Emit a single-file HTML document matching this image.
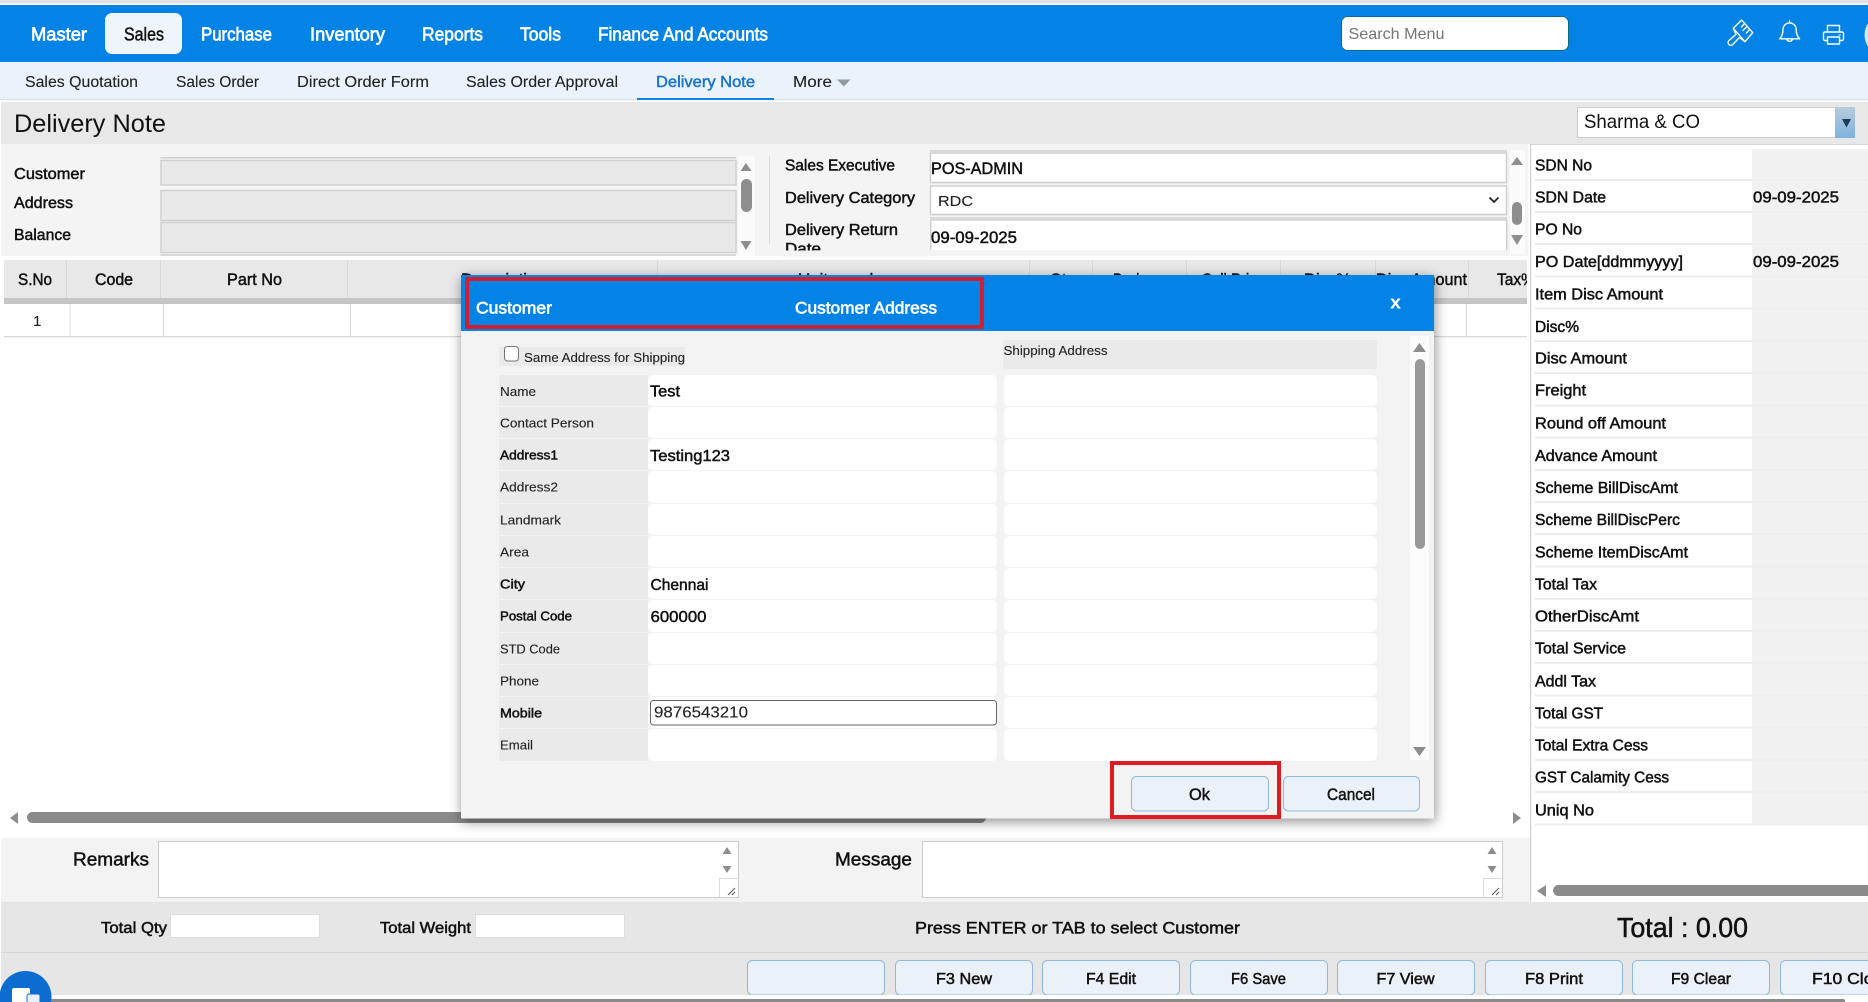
<!DOCTYPE html>
<html lang="en"><head><meta charset="utf-8"><title>Delivery Note</title>
<style>
html,body{margin:0;padding:0;width:1868px;height:1002px;overflow:hidden;background:#fff}
svg{display:block;font-family:"Liberation Sans",sans-serif}
text{fill:#111;white-space:pre}
.m{stroke:#111;stroke-width:.48px}
.w{fill:#fff;stroke:#fff;stroke-width:.65px}
.l{fill:#222;stroke:#222;stroke-width:.12px}
.a{fill:#8e8e8e}
</style></head><body>
<svg width="1868" height="1002" viewBox="0 0 1868 1002" xmlns="http://www.w3.org/2000/svg">
<defs>
<filter id="sh" x="-5%" y="-5%" width="110%" height="112%"><feDropShadow dx="1" dy="3" stdDeviation="6" flood-color="#000" flood-opacity=".45"/></filter>
<linearGradient id="dd" x1="0" y1="0" x2="0" y2="1"><stop offset="0" stop-color="#b9cbdc"/><stop offset="1" stop-color="#7fb2de"/></linearGradient>
</defs>
<rect width="1868" height="1002" fill="#fff"/>
<!-- top nav -->
<rect width="1868" height="3.5" fill="#dfe1e3"/>
<rect y="5" width="1868" height="57" fill="#0383e6"/>
<rect x="105" y="13" width="77" height="41" rx="7" fill="#eef5fc"/>
<g font-size="18">
<text class="w" x="31" y="40.5" textLength="56" lengthAdjust="spacingAndGlyphs">Master</text>
<text class="m" x="124" y="40.5" textLength="40" lengthAdjust="spacingAndGlyphs">Sales</text>
<text class="w" x="201" y="40.5" textLength="71" lengthAdjust="spacingAndGlyphs">Purchase</text>
<text class="w" x="310" y="40.5" textLength="75" lengthAdjust="spacingAndGlyphs">Inventory</text>
<text class="w" x="422" y="40.5" textLength="61" lengthAdjust="spacingAndGlyphs">Reports</text>
<text class="w" x="520" y="40.5" textLength="41" lengthAdjust="spacingAndGlyphs">Tools</text>
<text class="w" x="598" y="40.5" textLength="170" lengthAdjust="spacingAndGlyphs">Finance And Accounts</text>
</g>
<rect x="1341.5" y="16.5" width="227" height="34" rx="6" fill="#fff" stroke="#0b6b85"/>
<text x="1348.5" y="39" font-size="16" style="fill:#757575" textLength="96" lengthAdjust="spacingAndGlyphs">Search Menu</text>
<!-- icons -->
<g fill="none" stroke="#fff" stroke-width="1.4" stroke-linejoin="round" stroke-linecap="round">
<path d="M1733.3 28.3L1741.7 20L1752.7 32.7L1745 41.7Z"/>
<path d="M1733.3 28.3L1736 34.5L1729 40.5A2.6 2.6 0 0 0 1732.6 44.6L1739.5 37.5L1745 41.7"/>
<path d="M1744.5 23.5L1741.5 27M1747 26.5L1743 30.5M1749.5 29.5L1746.5 33"/>
<path d="M1779.7 38.8C1782.5 36 1783 33 1783 29.5A6.6 6.6 0 0 1 1796.2 29.5C1796.2 33 1796.8 36 1799.6 38.8Z"/>
<path d="M1786.8 39.2A2.9 2.9 0 0 0 1792.4 39.2M1789.6 21V23"/>
<path d="M1827.5 32V25.5H1839.5V32M1827.5 40.5H1825A1.6 1.6 0 0 1 1823.5 39V33.6A1.6 1.6 0 0 1 1825 32H1842A1.6 1.6 0 0 1 1843.5 33.6V39A1.6 1.6 0 0 1 1842 40.5H1839.5"/>
<path d="M1827.5 37H1839.5V44H1827.5Z"/><path d="M1839 35H1840.5" stroke-width="1"/>
</g>
<circle cx="1885" cy="35" r="20.5" fill="#d4e8f8"/>
<!-- sub nav -->
<rect y="62" width="1868" height="37" fill="#eaf3fc"/>
<rect y="99" width="1868" height="1.2" fill="#d6dde2"/>
<g font-size="15.5">
<text class="l" x="25" y="87" textLength="113" lengthAdjust="spacingAndGlyphs">Sales Quotation</text>
<text class="l" x="176" y="87" textLength="83" lengthAdjust="spacingAndGlyphs">Sales Order</text>
<text class="l" x="297" y="87" textLength="132" lengthAdjust="spacingAndGlyphs">Direct Order Form</text>
<text class="l" x="466" y="87" textLength="152" lengthAdjust="spacingAndGlyphs">Sales Order Approval</text>
<text x="656" y="87" style="fill:#1675d1;stroke:#1675d1;stroke-width:.45px" textLength="99" lengthAdjust="spacingAndGlyphs">Delivery Note</text>
<text class="l" x="793" y="87" textLength="39" lengthAdjust="spacingAndGlyphs">More</text>
</g>
<path d="M837 79.5H850.5L843.8 86.5Z" fill="#8e9aa4"/>
<rect x="637" y="98" width="137" height="2" fill="#0a84e0"/>
<!-- title bar -->
<rect x="1" y="102" width="1867" height="42" fill="#e8e8e8"/>
<text x="14" y="132" font-size="25" textLength="152" lengthAdjust="spacingAndGlyphs">Delivery Note</text>
<rect x="1577.5" y="107.5" width="258" height="30" fill="#fff" stroke="#ccc"/>
<rect x="1835" y="107" width="20" height="31" rx="1" fill="url(#dd)"/>
<path d="M1842 119H1851L1846.5 127.5Z" fill="#1c3a5c"/>
<text x="1584" y="128" font-size="19.5" textLength="116" lengthAdjust="spacingAndGlyphs">Sharma &amp; CO</text>
<!-- form area -->
<rect x="1" y="144" width="1527" height="112" fill="#f4f4f4"/>
<g font-size="16">
<text class="m" x="14" y="179" textLength="71" lengthAdjust="spacingAndGlyphs">Customer</text>
<text class="m" x="14" y="208" textLength="59" lengthAdjust="spacingAndGlyphs">Address</text>
<text class="m" x="14" y="240" textLength="57" lengthAdjust="spacingAndGlyphs">Balance</text>
</g>
<g fill="#e9e9e9" stroke="#d0d0d0" stroke-width="1.5">
<path d="M160.5 157.8H736" fill="none"/>
<rect x="161" y="160.5" width="575" height="24.5"/>
<rect x="161" y="190.5" width="575" height="30"/>
<rect x="161" y="222.5" width="575" height="30"/>
<path d="M160.5 255H736" fill="none"/>
</g>
<rect x="738" y="156" width="17" height="100" fill="#fbfbfb"/>
<path d="M746 163L751.5 171H740.5Z" class="a"/><rect x="741" y="179" width="11" height="33" rx="5.5" fill="#8e8e8e"/><path d="M746 250L751.5 241H740.5Z" class="a"/>
<rect x="769" y="156" width="1" height="88" fill="#dcdcdc"/>
<g font-size="16">
<text class="m" x="785" y="170.5" textLength="110" lengthAdjust="spacingAndGlyphs">Sales Executive</text>
<text class="m" x="785" y="203" textLength="130" lengthAdjust="spacingAndGlyphs">Delivery Category</text>
<text class="m" x="785" y="235" textLength="113" lengthAdjust="spacingAndGlyphs">Delivery Return</text>
<text class="m" x="785" y="254" textLength="36" lengthAdjust="spacingAndGlyphs">Date</text>
</g>
<rect x="780" y="250.5" width="148" height="6" fill="#f4f4f4"/>
<g fill="#fff" stroke="#cfcfcf" stroke-width="1.5">
<path d="M930 151H1507" fill="none"/>
<rect x="930.5" y="153" width="576" height="29.5"/>
<rect x="930.5" y="186" width="576" height="28.5"/>
<path d="M930 218H1507" fill="none"/>
<path d="M930.7 220V250H1506.7V220H930.7Z" stroke="none"/>
<path d="M930.7 220H1506.7V250M930.7 220V250" fill="none"/>
</g>
<text class="m" x="931" y="174" font-size="16.5" textLength="92" lengthAdjust="spacingAndGlyphs">POS-ADMIN</text>
<text x="938" y="206" font-size="15" class="l" textLength="35" lengthAdjust="spacingAndGlyphs">RDC</text>
<path d="M1489.5 197.5L1494 202L1498.5 197.5" fill="none" stroke="#222" stroke-width="1.8"/>
<text class="m" x="931" y="243" font-size="16.5" textLength="86" lengthAdjust="spacingAndGlyphs">09-09-2025</text>
<rect x="1510" y="150" width="15" height="104" fill="#fbfbfb"/>
<path d="M1517 157L1523 165H1511Z" class="a"/><rect x="1512" y="202" width="10" height="23" rx="5" fill="#8e8e8e"/><path d="M1517 245L1523 235H1511Z" class="a"/>
<!-- table -->
<rect x="4" y="260" width="1523" height="38" fill="#e8e8e8"/>
<rect x="4" y="298" width="1523" height="6" fill="#c6c6c6"/>
<rect x="4" y="336" width="1523" height="1.3" fill="#d8d8d8"/>
<path d="M66.5 260V298M160.5 260V298M347.5 260V298M657.5 260V298M1029.5 260V298M1092.5 260V298M1186.5 260V298M1280.5 260V298M1375.5 260V298M1468.5 260V298M70 304V336M163.5 304V336M350.5 304V336M1466.5 304V336" stroke="#d8d8d8" fill="none"/>
<g font-size="16.5">
<text class="m" x="18" y="285" textLength="34" lengthAdjust="spacingAndGlyphs">S.No</text>
<text class="m" x="95" y="285" textLength="38" lengthAdjust="spacingAndGlyphs">Code</text>
<text class="m" x="227" y="285" textLength="55" lengthAdjust="spacingAndGlyphs">Part No</text>
<text class="m" x="461" y="285" textLength="85" lengthAdjust="spacingAndGlyphs">Description</text>
<text class="m" x="798" y="285" textLength="80" lengthAdjust="spacingAndGlyphs">Unit speak</text>
<text class="m" x="1050" y="285" textLength="24" lengthAdjust="spacingAndGlyphs">Qty</text>
<text class="m" x="1113" y="285" textLength="30" lengthAdjust="spacingAndGlyphs">Pack</text>
<text class="m" x="1202" y="285" textLength="63" lengthAdjust="spacingAndGlyphs">Sell Price</text>
<text class="m" x="1304" y="285" textLength="47" lengthAdjust="spacingAndGlyphs">Disc%</text>
<text class="m" x="1376" y="285" textLength="91" lengthAdjust="spacingAndGlyphs">Disc Amount</text>
<text class="m" x="1497" y="285" textLength="38" lengthAdjust="spacingAndGlyphs">Tax%</text>
</g>
<rect x="1527" y="256" width="4" height="60" fill="#fff"/>
<text x="33" y="326" font-size="15" class="l">1</text>
<!-- horizontal scrollbar -->
<rect x="27" y="812" width="959" height="11" rx="5.5" fill="#8a8a8a"/>
<path d="M10 818L18 812V824Z" class="a"/>
<path d="M1521 818L1513 812V824Z" class="a"/>
<!-- remarks area -->
<rect x="1" y="838" width="1529" height="64" fill="#f3f3f3"/>
<text class="m" x="73" y="865.5" font-size="18.5" textLength="76" lengthAdjust="spacingAndGlyphs">Remarks</text>
<text class="m" x="835" y="865.5" font-size="18.5" textLength="77" lengthAdjust="spacingAndGlyphs">Message</text>
<rect x="158.5" y="841.5" width="580" height="56" fill="#fff" stroke="#ccc"/>
<rect x="922.5" y="841.5" width="580" height="56" fill="#fff" stroke="#ccc"/>
<g class="a">
<path d="M727 847L731.5 854H722.5Z"/><path d="M727 873L731.5 866H722.5Z"/>
<path d="M1492 847L1496.5 854H1487.5Z"/><path d="M1492 873L1496.5 866H1487.5Z"/>
</g>
<path d="M719.5 897V878.5H738.5M1483.5 897V878.5H1502.5" fill="none" stroke="#ddd"/>
<path d="M728 895L735 888M732 895L735 892M1492 895L1499 888M1496 895L1499 892" stroke="#555" fill="none"/>
<!-- right panel -->
<rect x="1530" y="144" width="338" height="758" fill="#fff"/>
<rect x="1752" y="149" width="116" height="675" fill="#f1f1f1"/>
<rect x="1530" y="144" width="338" height="1" fill="#d6d6d6"/>
<rect x="1530" y="144" width="1.2" height="758" fill="#d0d0d0"/>
<path d="M1535 180H1868M1535 212H1868M1535 244H1868M1535 276.5H1868M1535 308.5H1868M1535 341H1868M1535 373H1868M1535 405.5H1868M1535 437.5H1868M1535 470H1868M1535 502H1868M1535 534H1868M1535 566.5H1868M1535 599H1868M1535 631H1868M1535 663H1868M1535 695.5H1868M1535 727.5H1868M1535 760H1868M1535 792H1868M1535 824.5H1868" stroke="#ededed" stroke-width="2" fill="none"/>
<g font-size="15.5">
<text class="m" x="1535" y="170.5" textLength="57" lengthAdjust="spacingAndGlyphs">SDN No</text>
<text class="m" x="1535" y="202.5" textLength="71" lengthAdjust="spacingAndGlyphs">SDN Date</text>
<text class="m" x="1535" y="234.5" textLength="47" lengthAdjust="spacingAndGlyphs">PO No</text>
<text class="m" x="1535" y="267" textLength="148" lengthAdjust="spacingAndGlyphs">PO Date[ddmmyyyy]</text>
<text class="m" x="1535" y="299.5" textLength="128" lengthAdjust="spacingAndGlyphs">Item Disc Amount</text>
<text class="m" x="1535" y="332" textLength="44" lengthAdjust="spacingAndGlyphs">Disc%</text>
<text class="m" x="1535" y="363.5" textLength="92" lengthAdjust="spacingAndGlyphs">Disc Amount</text>
<text class="m" x="1535" y="395.5" textLength="51" lengthAdjust="spacingAndGlyphs">Freight</text>
<text class="m" x="1535" y="428.5" textLength="131" lengthAdjust="spacingAndGlyphs">Round off Amount</text>
<text class="m" x="1535" y="461" textLength="122" lengthAdjust="spacingAndGlyphs">Advance Amount</text>
<text class="m" x="1535" y="493" textLength="143" lengthAdjust="spacingAndGlyphs">Scheme BillDiscAmt</text>
<text class="m" x="1535" y="525" textLength="145" lengthAdjust="spacingAndGlyphs">Scheme BillDiscPerc</text>
<text class="m" x="1535" y="557.5" textLength="153" lengthAdjust="spacingAndGlyphs">Scheme ItemDiscAmt</text>
<text class="m" x="1535" y="589.5" textLength="62" lengthAdjust="spacingAndGlyphs">Total Tax</text>
<text class="m" x="1535" y="621.5" textLength="104" lengthAdjust="spacingAndGlyphs">OtherDiscAmt</text>
<text class="m" x="1535" y="653.5" textLength="91" lengthAdjust="spacingAndGlyphs">Total Service</text>
<text class="m" x="1535" y="686.5" textLength="61" lengthAdjust="spacingAndGlyphs">Addl Tax</text>
<text class="m" x="1535" y="718.5" textLength="68" lengthAdjust="spacingAndGlyphs">Total GST</text>
<text class="m" x="1535" y="750.5" textLength="113" lengthAdjust="spacingAndGlyphs">Total Extra Cess</text>
<text class="m" x="1535" y="782.5" textLength="134" lengthAdjust="spacingAndGlyphs">GST Calamity Cess</text>
<text class="m" x="1535" y="815.5" textLength="59" lengthAdjust="spacingAndGlyphs">Uniq No</text>
<text class="m" x="1753" y="202.5" textLength="86" lengthAdjust="spacingAndGlyphs">09-09-2025</text>
<text class="m" x="1753" y="267" textLength="86" lengthAdjust="spacingAndGlyphs">09-09-2025</text>
</g>
<path d="M1537 891L1546 885V897Z" class="a"/>
<rect x="1553" y="885" width="330" height="11" rx="5.5" fill="#8a8a8a"/>
<!-- footer -->
<rect x="1" y="902" width="1867" height="93" fill="#e6e6e6"/>
<rect x="1" y="952" width="1867" height="1" fill="#d6d6d6"/>
<text class="m" x="101" y="933" font-size="15.5" textLength="66" lengthAdjust="spacingAndGlyphs">Total Qty</text>
<rect x="170.5" y="914.5" width="149" height="23" fill="#fff" stroke="#ddd"/>
<text class="m" x="380" y="933" font-size="15.5" textLength="91" lengthAdjust="spacingAndGlyphs">Total Weight</text>
<rect x="475.5" y="914.5" width="149" height="23" fill="#fff" stroke="#ddd"/>
<text class="m" x="915" y="933.5" font-size="17" textLength="325" lengthAdjust="spacingAndGlyphs">Press ENTER or TAB to select Customer</text>
<text class="m" x="1617" y="937" font-size="28" textLength="131" lengthAdjust="spacingAndGlyphs">Total : 0.00</text>
<g fill="#ebf1f9" stroke="#8fb8e0">
<rect x="747.5" y="960.5" width="137" height="34.5" rx="5"/>
<rect x="895.5" y="960.5" width="137" height="34.5" rx="5"/>
<rect x="1042.5" y="960.5" width="137" height="34.5" rx="5"/>
<rect x="1190.5" y="960.5" width="137" height="34.5" rx="5"/>
<rect x="1337.5" y="960.5" width="137" height="34.5" rx="5"/>
<rect x="1485.5" y="960.5" width="137" height="34.5" rx="5"/>
<rect x="1632.5" y="960.5" width="137" height="34.5" rx="5"/>
<rect x="1780.5" y="960.5" width="137" height="34.5" rx="5"/>
</g>
<g font-size="15.5">
<text class="m" x="936" y="984" textLength="56" lengthAdjust="spacingAndGlyphs">F3 New</text>
<text class="m" x="1086" y="984" textLength="50" lengthAdjust="spacingAndGlyphs">F4 Edit</text>
<text class="m" x="1231" y="984" textLength="55" lengthAdjust="spacingAndGlyphs">F6 Save</text>
<text class="m" x="1376.5" y="984" textLength="58" lengthAdjust="spacingAndGlyphs">F7 View</text>
<text class="m" x="1525" y="984" textLength="58" lengthAdjust="spacingAndGlyphs">F8 Print</text>
<text class="m" x="1671" y="984" textLength="60" lengthAdjust="spacingAndGlyphs">F9 Clear</text>
<text class="m" x="1812" y="984" textLength="80" lengthAdjust="spacingAndGlyphs">F10 Close</text>
</g>
<rect y="995" width="1868" height="4" fill="#fff"/>
<rect x="48" y="999" width="1797" height="5" rx="2" fill="#8a8a8a"/>
<circle cx="25.5" cy="997" r="26" fill="#0c6ccf"/>
<rect x="12" y="988" width="18" height="20" rx="2" fill="#fff"/>
<rect x="27" y="994" width="13" height="12" rx="2" fill="#e8f0fb" stroke="#0c6ccf"/>
<!-- modal -->
<g>
<rect x="461" y="275" width="973" height="543.5" fill="#f3f3f3" filter="url(#sh)"/>
<rect x="461" y="275" width="973" height="56" fill="#0383e6"/>
<rect x="467" y="279" width="515" height="48" fill="none" stroke="#cf1f30" stroke-width="4"/>
<g font-size="17">
<text class="w" x="476" y="313.5" textLength="76" lengthAdjust="spacingAndGlyphs">Customer</text>
<text class="w" x="795" y="313.5" textLength="142" lengthAdjust="spacingAndGlyphs">Customer Address</text>
</g>
<text x="1390" y="308.5" font-size="18" font-weight="bold" style="fill:#fff" textLength="11" lengthAdjust="spacingAndGlyphs">x</text>
<rect x="499" y="347" width="186" height="19" fill="#eaeaea"/>
<rect x="504.5" y="346.5" width="14" height="14.5" rx="3" fill="#fff" stroke="#777"/>
<text x="524" y="362" font-size="13" class="l" textLength="161" lengthAdjust="spacingAndGlyphs">Same Address for Shipping</text>
<rect x="1003" y="340" width="374" height="29" fill="#eaeaea"/>
<text x="1003.5" y="355" font-size="13" class="l" textLength="104" lengthAdjust="spacingAndGlyphs">Shipping Address</text>
<!-- rows -->
<rect x="499" y="375" width="149" height="386" fill="#eaeaea"/>
<path d="M499 406.5H648M499 438.5H648M499 470.5H648M499 503.5H648M499 535.5H648M499 567.5H648M499 599.5H648M499 632.5H648M499 664.5H648M499 696.5H648M499 728.5H648" stroke="#f3f3f3"/>
<g fill="#fff">
<rect x="648" y="375" width="349" height="31" rx="5"/><rect x="1004" y="375" width="373" height="31" rx="5"/>
<rect x="648" y="407" width="349" height="31" rx="5"/><rect x="1004" y="407" width="373" height="31" rx="5"/>
<rect x="648" y="439" width="349" height="31" rx="5"/><rect x="1004" y="439" width="373" height="31" rx="5"/>
<rect x="648" y="471" width="349" height="32" rx="5"/><rect x="1004" y="471" width="373" height="32" rx="5"/>
<rect x="648" y="504" width="349" height="31" rx="5"/><rect x="1004" y="504" width="373" height="31" rx="5"/>
<rect x="648" y="536" width="349" height="31" rx="5"/><rect x="1004" y="536" width="373" height="31" rx="5"/>
<rect x="648" y="568" width="349" height="31" rx="5"/><rect x="1004" y="568" width="373" height="31" rx="5"/>
<rect x="648" y="600" width="349" height="32" rx="5"/><rect x="1004" y="600" width="373" height="32" rx="5"/>
<rect x="648" y="633" width="349" height="31" rx="5"/><rect x="1004" y="633" width="373" height="31" rx="5"/>
<rect x="648" y="665" width="349" height="31" rx="5"/><rect x="1004" y="665" width="373" height="31" rx="5"/>
<rect x="648" y="697" width="349" height="31" rx="5"/><rect x="1004" y="697" width="373" height="31" rx="5"/>
<rect x="648" y="729" width="349" height="32" rx="5"/><rect x="1004" y="729" width="373" height="32" rx="5"/>
</g>
<rect x="650.5" y="700.5" width="346" height="24.5" rx="3" fill="#fff" stroke="#666"/>
<g font-size="13">
<text class="l" x="500" y="396" textLength="36" lengthAdjust="spacingAndGlyphs">Name</text>
<text class="l" x="500" y="427.5" textLength="94" lengthAdjust="spacingAndGlyphs">Contact Person</text>
<text class="m" x="500" y="459.5" textLength="58" lengthAdjust="spacingAndGlyphs">Address1</text>
<text class="l" x="500" y="491.5" textLength="58" lengthAdjust="spacingAndGlyphs">Address2</text>
<text class="l" x="500" y="524.5" textLength="61" lengthAdjust="spacingAndGlyphs">Landmark</text>
<text class="l" x="500" y="556.5" textLength="29" lengthAdjust="spacingAndGlyphs">Area</text>
<text class="m" x="500" y="588.5" textLength="25" lengthAdjust="spacingAndGlyphs">City</text>
<text class="m" x="500" y="620.5" textLength="72" lengthAdjust="spacingAndGlyphs">Postal Code</text>
<text class="l" x="500" y="653.5" textLength="60" lengthAdjust="spacingAndGlyphs">STD Code</text>
<text class="l" x="500" y="685.5" textLength="39" lengthAdjust="spacingAndGlyphs">Phone</text>
<text class="m" x="500" y="717.5" textLength="42" lengthAdjust="spacingAndGlyphs">Mobile</text>
<text class="l" x="500" y="749.5" textLength="33" lengthAdjust="spacingAndGlyphs">Email</text>
</g>
<g font-size="16">
<text class="m" x="650" y="396.5" textLength="30" lengthAdjust="spacingAndGlyphs">Test</text>
<text class="m" x="650" y="461" textLength="80" lengthAdjust="spacingAndGlyphs">Testing123</text>
<text class="m" x="650.5" y="590" textLength="58" lengthAdjust="spacingAndGlyphs">Chennai</text>
<text class="m" x="650.5" y="622" textLength="56" lengthAdjust="spacingAndGlyphs">600000</text>
</g>
<text class="l" x="654" y="717.5" font-size="15.5" textLength="94" lengthAdjust="spacingAndGlyphs">9876543210</text>
<!-- modal scrollbar -->
<rect x="1410" y="336" width="19" height="424" fill="#fcfcfc"/>
<path d="M1419.5 343L1426 352H1413Z" class="a"/>
<rect x="1415" y="359" width="10" height="190" rx="5" fill="#999"/>
<path d="M1419.5 756L1426 747H1413Z" class="a"/>
<!-- modal buttons -->
<rect x="1131.5" y="776.5" width="137" height="34.5" rx="5" fill="#ebf1f9" stroke="#8fb8e0"/>
<rect x="1283.5" y="776.5" width="136" height="34.5" rx="5" fill="#ebf1f9" stroke="#8fb8e0"/>
<text class="m" x="1189" y="800" font-size="16.5" textLength="21" lengthAdjust="spacingAndGlyphs">Ok</text>
<text class="m" x="1327" y="800" font-size="16.5" textLength="48" lengthAdjust="spacingAndGlyphs">Cancel</text>
<rect x="1112" y="763" width="167" height="54" fill="none" stroke="#e01b22" stroke-width="4"/>
</g>
</svg>
</body></html>
